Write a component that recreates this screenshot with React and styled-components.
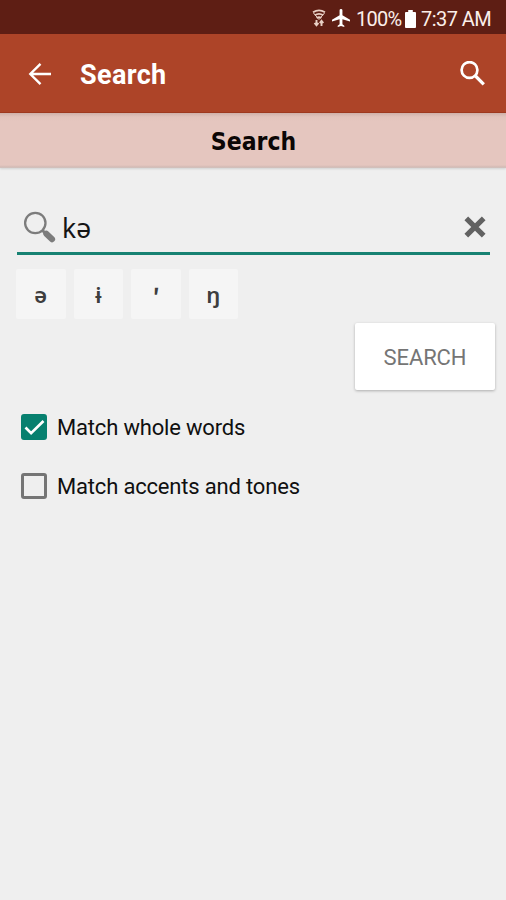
import React, { useState } from "react";
import styled, { createGlobalStyle } from "styled-components";

const GlobalStyle = createGlobalStyle`
  * { box-sizing: border-box; }
  html, body { margin: 0; background: #efefef; }
  body { font-family: Roboto, "Noto Sans", sans-serif; overflow: hidden; }
  button, input { font: inherit; border: 0; padding: 0; margin: 0; background: none; color: inherit; outline: none; }
  svg { display: block; flex: none; }
`;

const Screen = styled.main`
  width: 506px;
  height: 900px;
  display: flex;
  flex-direction: column;
  background: #efefef;
`;

const StatusBar = styled.div`
  height: 34px;
  flex: none;
  display: flex;
  align-items: center;
  justify-content: flex-end;
  padding: 3px 15px 0 0;
  background: #5e1e14;
  color: #fbeeea;
`;

const StatusIcons = styled.div`
  display: flex;
  align-items: center;
  gap: 6px;
  padding-bottom: 1px;
`;

const StatusText = styled.span`
  font-size: 20px;
  line-height: 24px;
  white-space: nowrap;
  width: ${(p) => p.$width}px;
  margin-left: ${(p) => p.$gap}px;
  letter-spacing: ${(p) => p.$spacing}px;
`;

const AppBar = styled.header`
  height: 79px;
  flex: none;
  display: flex;
  align-items: center;
  padding: 1px 20px 0 28px;
  background: #ad4428;
  border-bottom: 1px solid #a03a20;
  color: #fff;
`;

const IconButton = styled.button`
  display: flex;
`;

const AppTitle = styled.h1`
  flex: 1;
  margin: 3px 0 0 28px;
  font-size: 27px;
  line-height: 32px;
  font-weight: 700;
  letter-spacing: 0.35px;
`;

const Banner = styled.h2`
  height: 55px;
  flex: none;
  margin: 0;
  padding-left: 1px;
  text-align: center;
  font: 700 24.5px/58px "DejaVu Sans Condensed", "DejaVu Sans", sans-serif;
  font-stretch: condensed;
  color: #0b0605;
  background: linear-gradient(#cfb1aa, #e2c4bd 4px, #e5c6bf 8px, #e5c6bf 52px, #d3bbb5 54px, #d0c4c1);
  box-shadow: 0 1px 2px rgba(0, 0, 0, 0.12);
`;

const SearchField = styled.div`
  height: 53px;
  margin: 34px 16px 0 17px;
  padding: 0 4px 0 6px;
  flex: none;
  display: flex;
  align-items: center;
  border-bottom: 3px solid #178273;
`;

const Query = styled.input`
  flex: 1;
  min-width: 0;
  height: 40px;
  margin: 1px 0 0 6px;
  font-family: "Noto Sans", sans-serif;
  font-size: 26.5px;
  color: #151515;
`;

const KeyRow = styled.div`
  display: flex;
  flex: none;
  gap: 8px;
  margin: 14px 0 0 16px;
`;

const Key = styled.button`
  width: 49.5px;
  height: 50px;
  padding-bottom: 1px;
  background: #f5f5f5;
  border-radius: 2px;
  font: 600 22px/40px "Noto Sans", sans-serif;
  color: #3e3e3e;
`;

const Saltillo = styled.span`
  display: inline-block;
  font-weight: 800;
  font-size: 20px;
  transform: skewX(-6deg);
`;

const SearchButton = styled.button`
  align-self: flex-end;
  flex: none;
  width: 140px;
  height: 67px;
  margin: 4px 11px 0 0;
  padding-top: 2px;
  background: #fff;
  border-radius: 2px;
  box-shadow: 0 1px 3px rgba(0, 0, 0, 0.28);
  font-size: 22px;
  letter-spacing: -0.1px;
  color: #757575;
`;

const Options = styled.div`
  display: flex;
  flex-direction: column;
  gap: 29px;
  margin: 22px 0 0 21px;
`;

const Option = styled.label`
  height: 30px;
  display: flex;
  align-items: center;
  gap: 10px;
  font-size: 22px;
  letter-spacing: -0.18px;
  color: #101010;
  white-space: nowrap;
  cursor: pointer;
`;

const Checkbox = styled.span`
  width: 26px;
  height: 26px;
  border-radius: 3px;
  border: 3px solid ${(p) => (p.$checked ? "#07806f" : "#757575")};
  background: ${(p) => (p.$checked ? "#07806f" : "transparent")};
  display: flex;
  align-items: center;
  justify-content: center;
`;

const HiddenInput = styled.input`
  appearance: none;
  width: 0;
  height: 0;
  position: absolute;
`;

const Wifi = () => (
  <svg width="14" height="18" viewBox="0 0 14 18" fill="none" stroke="#e9d0c5" strokeWidth="1.8">
    <path d="M1 3.2Q7-.5 13 3.2M2.8 6.2Q7 3.4 11.2 6.2M4.7 9Q7 7.4 9.3 9" />
    <path d="M1.5 4 7 10.5 12.5 4" strokeWidth="1" />
    <path d="M4.500 11v5M2.500 14l2 2.300 2-2.300M9.500 17v-5M7.800 14l1.700-2.200 1.800 2.200" strokeWidth="1.900" />
  </svg>
);

const Plane = () => (
  <svg width="18" height="18" viewBox="2.5 2 19 20" preserveAspectRatio="none" fill="#fff">
    <path d="M21.5 16v-2l-8-5V3.5a1.5 1.5 0 0 0-3 0V9l-8 5v2l8-2.5V19l-2 1.5V22l3.5-1 3.500 1v-1.500l-2-1.500v-5.500z" />
  </svg>
);

const Battery = () => (
  <svg width="11" height="18" viewBox="0 0 12 18" preserveAspectRatio="none" fill="#fff">
    <path d="M3.500 0h5v2H11q1 0 1 1v14q0 1-1 1H1q-1 0-1-1V3q0-1 1-1h2.500z" />
  </svg>
);

const Back = () => (
  <svg width="24" height="24" viewBox="0 0 24 24" fill="none" stroke="#fff" strokeWidth="2.400">
    <path d="M23 12H2.500M12.500 1.800 2.300 12l10.200 10.200" />
  </svg>
);

const Lens = () => (
  <svg width="26" height="26" viewBox="0 0 26 26" fill="none" stroke="#fff">
    <circle cx="9.500" cy="9" r="7.900" strokeWidth="2.700" />
    <path d="m15.500 15 8.300 8.300" strokeWidth="3.200" />
  </svg>
);

const FieldLens = () => (
  <svg width="33" height="32" viewBox="0 0 33 32" fill="none" stroke="#7c7c7c">
    <circle cx="12.300" cy="12" r="10.200" strokeWidth="2.300" />
    <path d="m19.300 19.300 4 4" strokeWidth="3" />
    <path d="m23.300 22.800 5.800 5.500" strokeWidth="6" strokeLinecap="round" />
  </svg>
);

const Clear = () => (
  <svg width="22" height="22" viewBox="0 0 22 22" fill="none" stroke="#626262" strokeWidth="5.200">
    <path d="m2.300 2.300 17.400 17.400M19.700 2.300 2.300 19.700" />
  </svg>
);

const Tick = () => (
  <svg width="21" height="17" viewBox="0 0 21 17" fill="none" stroke="#fff" strokeWidth="2.700">
    <path d="m1.500 8.500 5.600 5.600L19.500 2" />
  </svg>
);

function CheckOption({ label, initial }) {
  const [checked, setChecked] = useState(initial);
  return (
    <Option>
      <HiddenInput type="checkbox" checked={checked} onChange={() => setChecked(!checked)} />
      <Checkbox $checked={checked}>{checked && <Tick />}</Checkbox>
      <span>{label}</span>
    </Option>
  );
}

export default function App() {
  const [query, setQuery] = useState("kə");
  return (
    <Screen>
      <GlobalStyle />
      <StatusBar>
        <StatusIcons>
          <Wifi />
          <Plane />
        </StatusIcons>
        <StatusText $width={49} $gap={6} $spacing={-0.75}>100%</StatusText>
        <Battery />
        <StatusText $width={70} $gap={5} $spacing={-0.55}>7:37 AM</StatusText>
      </StatusBar>
      <AppBar>
        <IconButton aria-label="Back"><Back /></IconButton>
        <AppTitle>Search</AppTitle>
        <IconButton aria-label="Search"><Lens /></IconButton>
      </AppBar>
      <Banner>Search</Banner>
      <SearchField>
        <FieldLens />
        <Query aria-label="Search text" value={query} onChange={(e) => setQuery(e.target.value)} />
        <IconButton aria-label="Clear" onClick={() => setQuery("")}><Clear /></IconButton>
      </SearchField>
      <KeyRow>
        {["ə", "ɨ", "ꞌ", "ŋ"].map((c) => (
          <Key key={c} onClick={() => setQuery(query + c)}>
            {c === "ꞌ" ? <Saltillo>{c}</Saltillo> : c}
          </Key>
        ))}
      </KeyRow>
      <SearchButton>SEARCH</SearchButton>
      <Options>
        <CheckOption label="Match whole words" initial={true} />
        <CheckOption label="Match accents and tones" initial={false} />
      </Options>
    </Screen>
  );
}
